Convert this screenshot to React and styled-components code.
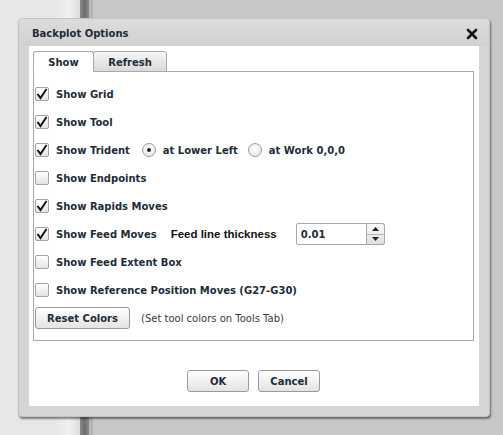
import React from "react";
import styled, { createGlobalStyle } from "styled-components";

const Global = createGlobalStyle`
  html, body { margin: 0; padding: 0; }
  body {
    width: 503px; height: 435px; overflow: hidden;
    font-family: "DejaVu Sans", Verdana, sans-serif;
  }
`;

const Desktop = styled.div`
  position: relative;
  width: 503px;
  height: 435px;
  display: flex;
  overflow: hidden;
`;

const Strip = styled.div`
  width: ${(p) => p.$w}px;
  flex: ${(p) => (p.$grow ? 1 : "none")};
  background: ${(p) => p.$bg};
`;

const Dialog = styled.div`
  position: absolute;
  left: 18px;
  top: 18px;
  width: 472px;
  height: 399px;
  box-sizing: border-box;
  background: #d5d5d5;
  border: 1px solid #c2c2c2;
  border-radius: 4px;
  box-shadow: 1px 2px 2px rgba(0, 0, 0, 0.45);
  display: flex;
  flex-direction: column;
`;

const TitleBar = styled.div`
  height: 27px;
  box-sizing: border-box;
  display: flex;
  align-items: center;
  justify-content: space-between;
  padding: 2px 11px 0 13px;
  background: linear-gradient(#dcdcdc, #d1d1d1);
  border-radius: 4px 4px 0 0;
`;

const Title = styled.span`
  font-size: 10px;
  font-weight: bold;
  color: #1d2c3b;
`;

const Close = styled.span`
  display: flex;
  width: 12px;
  height: 12px;
`;

const Body = styled.div`
  flex: 1;
  margin: 0 10px 10px 10px;
  background: #ffffff;
  display: flex;
  flex-direction: column;
  padding: 5px 5px 0 4px;
`;

const Tabs = styled.div`
  display: flex;
  height: 21px;
  margin-bottom: -1px;
  position: relative;
  z-index: 1;
`;

const Tab = styled.div`
  box-sizing: border-box;
  width: ${(p) => p.$w}px;
  height: 21px;
  display: flex;
  align-items: center;
  justify-content: center;
  padding-top: 1px;
  font-size: 10px;
  font-weight: bold;
  color: #1d2c3b;
  border: 1px solid #aaaaaa;
  border-bottom: ${(p) => (p.$active ? "1px solid #fff" : "1px solid #aaaaaa")};
  border-radius: 3px 3px 0 0;
  background: ${(p) =>
    p.$active ? "#ffffff" : "linear-gradient(#f6f6f6, #dadada)"};
  margin-right: -1px;
`;

const Panel = styled.div`
  box-sizing: border-box;
  height: 270px;
  border: 1px solid #aaaaaa;
  padding: 8px 0 0 1px;
  display: flex;
  flex-direction: column;
`;

const Row = styled.div`
  height: 28px;
  flex: none;
  display: flex;
  align-items: center;
`;

const Label = styled.span`
  font-size: 10px;
  font-weight: bold;
  color: #1d2c3b;
  white-space: nowrap;
`;

const Note = styled.span`
  font-size: 10px;
  color: #3a3a3a;
  margin-left: 11px;
  white-space: nowrap;
`;

const AltLabel = styled.span`
  font-family: "Liberation Sans", Arial, sans-serif;
  font-size: 11.5px;
  font-weight: bold;
  color: #111;
  margin-left: ${(p) => p.$ml}px;
  white-space: nowrap;
`;

const Box = styled.span`
  box-sizing: border-box;
  width: 14px;
  height: 14px;
  border: 1px solid #a3a3a3;
  border-radius: 2px;
  background: linear-gradient(#ffffff, #e4e4e4);
  display: flex;
  align-items: center;
  justify-content: center;
  margin-right: 7px;
  flex: none;
`;

const Radio = styled.span`
  box-sizing: border-box;
  width: 14px;
  height: 14px;
  border: 1px solid #9c9c9c;
  border-radius: 50%;
  background: radial-gradient(circle at 50% 40%, #ffffff, #e2e2e2);
  display: flex;
  align-items: center;
  justify-content: center;
  margin-left: ${(p) => p.$ml}px;
  margin-right: 7px;
  flex: none;
`;

const Dot = styled.span`
  width: 4px;
  height: 4px;
  border-radius: 50%;
  background: #222;
`;

const Spin = styled.div`
  display: flex;
  margin-left: 19px;
  height: 22px;
`;

const SpinInput = styled.div`
  box-sizing: border-box;
  width: 71px;
  height: 22px;
  border: 1px solid #a8a8a8;
  border-radius: 2px 0 0 2px;
  display: flex;
  align-items: center;
  padding-left: 4px;
  font-size: 10px;
  font-weight: bold;
  color: #1d2c3b;
`;

const SpinButtons = styled.div`
  box-sizing: border-box;
  width: 18px;
  height: 22px;
  border: 1px solid #a8a8a8;
  border-left: none;
  border-radius: 0 3px 3px 0;
  display: flex;
  flex-direction: column;
  background: linear-gradient(#fafafa, #e0e0e0);
`;

const SpinBtn = styled.div`
  flex: 1;
  display: flex;
  align-items: center;
  justify-content: center;
  border-top: ${(p) => (p.$down ? "1px solid #b5b5b5" : "none")};
`;

const Button = styled.div`
  box-sizing: border-box;
  width: ${(p) => p.$w}px;
  height: 22px;
  border: 1px solid #9a9a9a;
  border-radius: 3px;
  background: linear-gradient(#ffffff, #e3e3e3);
  display: flex;
  align-items: center;
  justify-content: center;
  font-size: 10px;
  font-weight: bold;
  color: #1d2c3b;
  flex: none;
`;

const Footer = styled.div`
  flex: 1;
  display: flex;
  justify-content: center;
  align-items: flex-start;
  gap: 9px;
  padding-top: 29px;
`;

const Check = () => (
  <svg width="12" height="12" viewBox="0 0 12 12">
    <path d="M1.5 6 L4.5 10 L10.5 1" fill="none" stroke="#111" strokeWidth="1.9" />
  </svg>
);

const CheckBox = ({ on }) => <Box>{on ? <Check /> : null}</Box>;

const Tri = ({ down }) => (
  <svg width="7" height="4" viewBox="0 0 7 4">
    <path d={down ? "M0 0 L7 0 L3.5 4 Z" : "M0 4 L7 4 L3.5 0 Z"} fill="#222" />
  </svg>
);

const CheckRow = ({ on, label, children }) => (
  <Row>
    <CheckBox on={on} />
    <Label>{label}</Label>
    {children}
  </Row>
);

export default function App() {
  return (
    <>
      <Global />
      <Desktop>
        <Strip $w={53} $bg="#e7e7e7" />
        <Strip $w={27} $bg="linear-gradient(90deg,#e6e6e6,#f1f1f1 60%,#dcdcdc)" />
        <Strip $w={9} $bg="linear-gradient(90deg,#8a8a8a,#6e6e6e,#8c8c8c)" />
        <Strip $w={4} $bg="#b4b4b4" />
        <Strip $grow $bg="#c7c7c7" />
        <Dialog>
          <TitleBar>
            <Title>Backplot Options</Title>
            <Close>
              <svg width="12" height="12" viewBox="0 0 12 12">
                <path d="M2 2 L10 10 M10 2 L2 10" stroke="#111" strokeWidth="2.6" strokeLinecap="round" />
              </svg>
            </Close>
          </TitleBar>
          <Body>
            <Tabs>
              <Tab $w={61} $active>Show</Tab>
              <Tab $w={74}>Refresh</Tab>
            </Tabs>
            <Panel>
              <CheckRow on label="Show Grid" />
              <CheckRow on label="Show Tool" />
              <CheckRow on label="Show Trident">
                <Radio $ml={12}><Dot /></Radio>
                <Label>at Lower Left</Label>
                <Radio $ml={10} />
                <Label>at Work 0,0,0</Label>
              </CheckRow>
              <CheckRow label="Show Endpoints" />
              <CheckRow on label="Show Rapids Moves" />
              <CheckRow on label="Show Feed Moves">
                <AltLabel $ml={14}>Feed line thickness</AltLabel>
                <Spin>
                  <SpinInput>0.01</SpinInput>
                  <SpinButtons>
                    <SpinBtn><Tri /></SpinBtn>
                    <SpinBtn $down><Tri down /></SpinBtn>
                  </SpinButtons>
                </Spin>
              </CheckRow>
              <CheckRow label="Show Feed Extent Box" />
              <CheckRow label="Show Reference Position Moves (G27-G30)" />
              <Row>
                <Button $w={95}>Reset Colors</Button>
                <Note>(Set tool colors on Tools Tab)</Note>
              </Row>
            </Panel>
            <Footer>
              <Button $w={62}>OK</Button>
              <Button $w={62}>Cancel</Button>
            </Footer>
          </Body>
        </Dialog>
      </Desktop>
    </>
  );
}
